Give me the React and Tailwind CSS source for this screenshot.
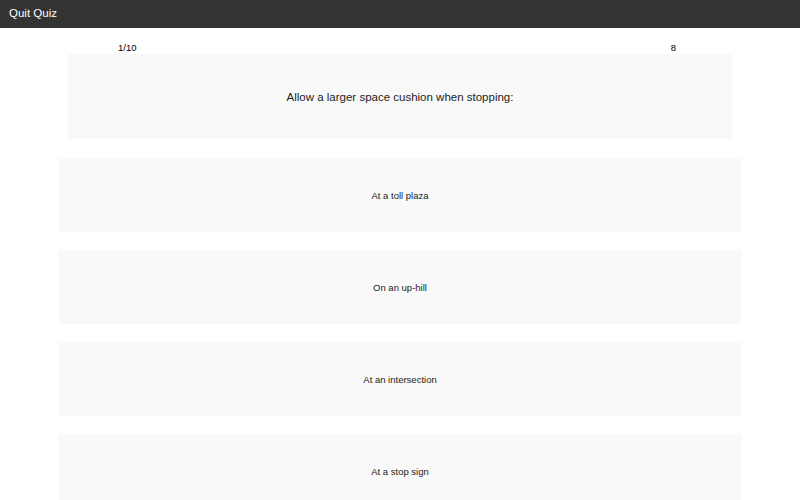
const answers = ['At a toll plaza', 'On an up-hill', 'At an intersection', 'At a stop sign'];

export default function App() {
  return (
    <div className="h-[500px] overflow-hidden bg-white font-['Liberation_Sans',Arial,sans-serif]">
      <div className="h-[28px] bg-[#333333] flex items-center px-[9px]">
        <span className="text-white text-[11.5px]">Quit Quiz</span>
      </div>
      <div className="w-[664px] mx-auto mt-[13px]">
        <div className="flex justify-between pl-[50px] pr-[56px] text-[9.5px] leading-[13px] text-black h-[13px]">
          <span>1/10</span>
          <span>8</span>
        </div>
        <div className="h-[85px] pt-[2px] bg-[#f9f9f9] flex items-center justify-center text-[11.5px] text-[#222]">
          Allow a larger space cushion when stopping:
        </div>
      </div>
      <div className="w-[682px] mx-auto mt-[19px] flex flex-col gap-[18px]">
        {answers.map(a => (
          <div key={a} className="h-[74px] pt-[2px] bg-[#f9f9f9] flex items-center justify-center text-[9.5px] text-[#222]">
            {a}
          </div>
        ))}
      </div>
    </div>
  );
}
